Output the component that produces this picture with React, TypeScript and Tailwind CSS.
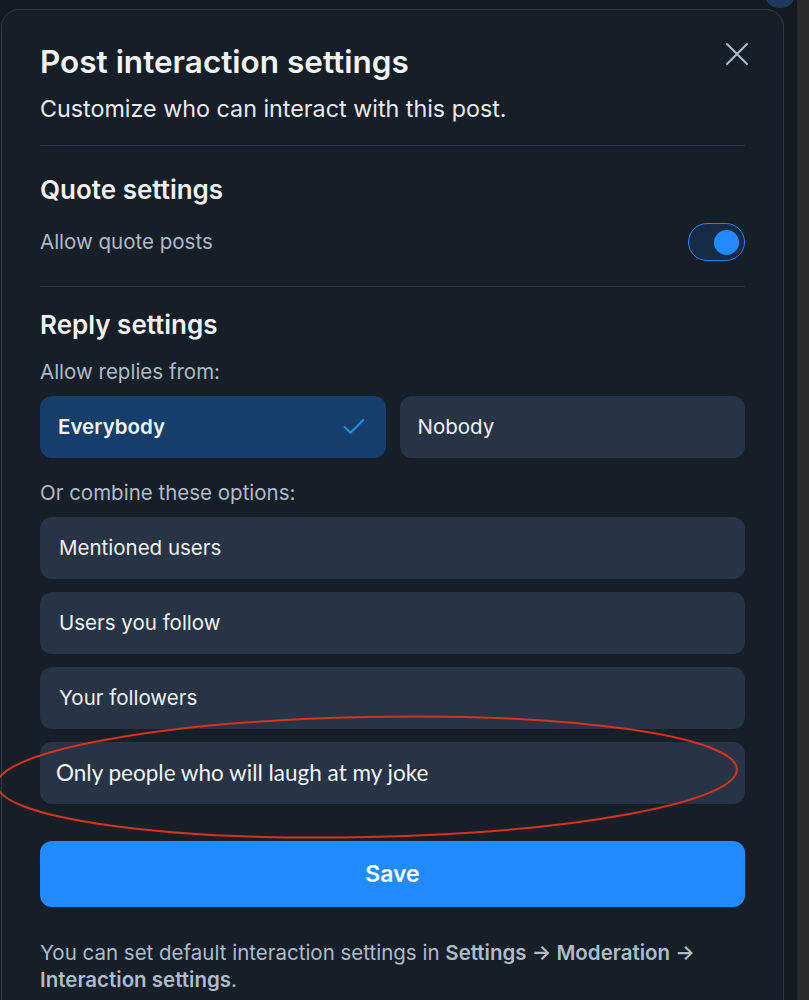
import { Check } from "lucide-react";

const font = { fontFamily: "Inter, 'Noto Sans', sans-serif" };

const comboOptions = ["Mentioned users", "Users you follow", "Your followers"];

export default function App() {
  return (
    <div
      className="flex h-[1000px] w-[809px] overflow-hidden bg-[#131a22]"
      style={font}
    >
      <div className="relative flex-1">
        {/* blue blob peeking at top right */}
        <div className="absolute right-[2px] top-[-20px] h-[28px] w-[30px] rounded-full bg-[#1d3a5e]" />

        <div className="ml-[1px] mt-[9px] h-[1020px] w-[783px] rounded-t-[18px] border border-[#2c3a4b] bg-[#161e27] px-[38px] pt-[33px]">
          {/* header */}
          <div className="flex items-start justify-between">
            <h1 className="text-[31.5px] font-semibold leading-[38px] text-[#f1f3f5]">
              Post interaction settings
            </h1>
            <svg width="24" height="24" viewBox="0 0 24 24" className="mr-[-4px] mt-[-1px]">
              <path d="M2 2 L22 22 M22 2 L2 22" stroke="#aebbc9" strokeWidth="2" strokeLinecap="round" />
            </svg>
          </div>
          <p className="mt-[13px] text-[23.3px] leading-[30px] text-[#e6ebf0]">
            Customize who can interact with this post.
          </p>

          <div className="mt-[21px] border-t border-[#2c3a4b]" />

          {/* quote settings */}
          <h2 className="mt-[28px] text-[26px] font-semibold leading-[32px] text-[#f1f3f5]">
            Quote settings
          </h2>
          <div className="mt-[17px] flex items-center justify-between">
            <span className="text-[20.5px] leading-[26px] text-[#aebbc9]">
              Allow quote posts
            </span>
            <div className="flex h-[38px] w-[57px] items-center justify-end rounded-full border border-[#2684f0] bg-[#172a43] pr-[5px]">
              <div className="h-[25px] w-[25px] rounded-full bg-[#208bfe]" />
            </div>
          </div>

          <div className="mt-[25px] border-t border-[#2c3a4b]" />

          {/* reply settings */}
          <h2 className="mt-[22px] text-[26px] font-semibold leading-[32px] text-[#f1f3f5]">
            Reply settings
          </h2>
          <p className="mt-[18px] text-[20.5px] leading-[26px] text-[#aebbc9]">
            Allow replies from:
          </p>
          <div className="mt-[11px] grid grid-cols-2 gap-[14px]">
            <div className="flex h-[62px] items-center justify-between rounded-[12px] bg-[#163e6c] pl-[18px] pr-[18px]">
              <span className="text-[20.5px] font-semibold text-[#f1f3f5]">
                Everybody
              </span>
              <Check className="h-[28px] w-[28px] text-[#208bfe]" strokeWidth={1.8} />
            </div>
            <div className="flex h-[62px] items-center rounded-[12px] bg-[#263445] pl-[18px]">
              <span className="text-[20.5px] text-[#f1f3f5]">Nobody</span>
            </div>
          </div>

          <p className="mt-[22px] text-[20.5px] leading-[26px] text-[#aebbc9]">
            Or combine these options:
          </p>
          <div className="mt-[11px] flex flex-col gap-[13px]">
            {comboOptions.map((label) => (
              <div
                key={label}
                className="flex h-[62px] items-center rounded-[12px] bg-[#263445] pl-[19px]"
              >
                <span className="text-[20.5px] text-[#f1f3f5]">{label}</span>
              </div>
            ))}
            <div className="relative flex h-[62px] items-center rounded-[12px] bg-[#263445] pl-[16px]">
              <span
                className="text-[22.5px] text-[#f4f6f8]"
                style={{ fontFamily: "Lato, 'Open Sans', sans-serif" }}
              >
                Only people who will laugh at my joke
              </span>
              {/* red annotation ellipse */}
              <svg
                className="pointer-events-none absolute left-[-45px] top-[-27px]"
                width="748"
                height="126"
                viewBox="0 0 748 126"
              >
                <ellipse
                  cx="372"
                  cy="62"
                  rx="370"
                  ry="60"
                  fill="none"
                  stroke="#d8321e"
                  strokeWidth="2"
                  transform="rotate(-1.2 372 62)"
                />
              </svg>
            </div>
          </div>

          <button className="mt-[37px] flex h-[66px] w-full items-center justify-center rounded-[12px] bg-[#208bfe]">
            <span className="text-[23px] font-semibold text-white">Save</span>
          </button>

          <p className="mt-[32px] text-[20.5px] leading-[27px] text-[#aebbc9]">
            You can set default interaction settings in{" "}
            <span className="font-semibold">Settings → Moderation →</span>{" "}
            <span className="font-semibold">Interaction settings</span>.
          </p>
        </div>
      </div>
      <div className="w-[12px] bg-[#2a2a2a]" />
    </div>
  );
}
